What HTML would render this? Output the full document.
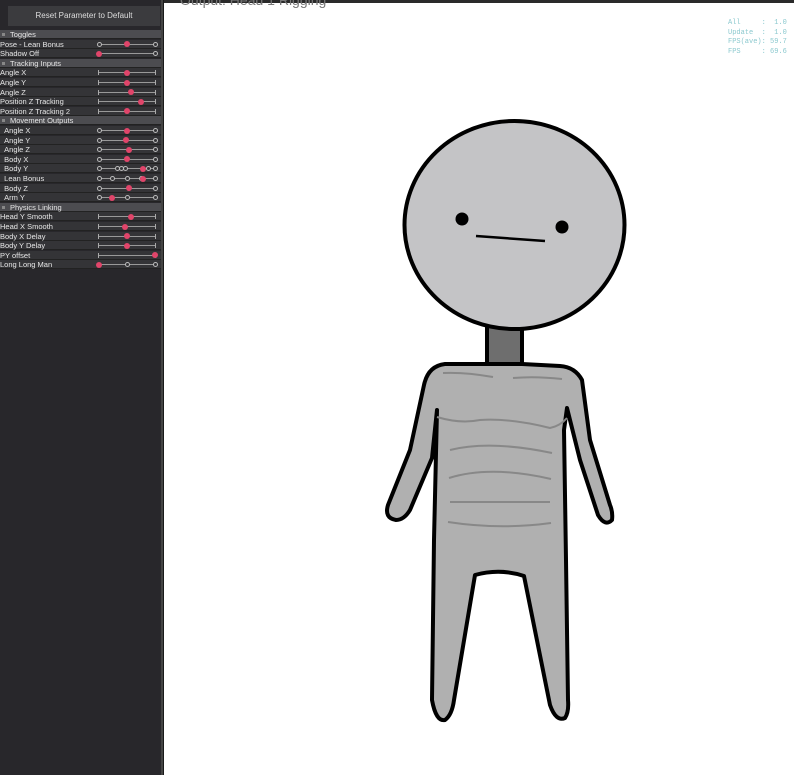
<!DOCTYPE html>
<html><head><meta charset="utf-8"><style>
*{margin:0;padding:0;box-sizing:border-box}
body{width:794px;height:775px;overflow:hidden;background:#fff;position:relative;font-family:"Liberation Sans",sans-serif}
#panel{position:absolute;left:0;top:0;width:161px;height:775px;background:#28272b}
#sep{position:absolute;left:161px;top:0;width:3px;height:775px;background:#444;border-right:1px solid #1a1a1a}
#topbar{position:absolute;left:164px;top:0;width:630px;height:3px;background:#2a2a2a}
.btn{position:absolute;left:8px;top:6px;width:152px;height:20px;background:#3b3b3e;color:#ddd;font-size:8px;text-align:center;line-height:20px}
.row{position:absolute;left:0;width:161px;height:9px;background:#343437;color:#e6e6e6;font-size:7.5px;line-height:9px;white-space:nowrap;border-bottom:1px solid #222}
.hd{background:#4c4c50}
.hd i{position:absolute;left:2px;top:3px;width:3px;height:3px;background:#888}
.hd span{position:absolute;left:10px}
.tr{position:absolute;left:98px;width:58px;top:4px;height:1px;background:#999}
.c{position:absolute;top:2px;width:5px;height:5px;border:1px solid #bbb;border-radius:50%;background:#343437}
.r{position:absolute;top:1.5px;width:6px;height:6px;border-radius:50%;background:#e0456a}
.tk{position:absolute;top:2px;width:1px;height:5px;background:#aaa}
#title{position:absolute;left:180px;top:-8px;font-size:14px;color:#777}
#stats{position:absolute;left:728px;top:19px;font-family:"Liberation Mono",monospace;font-size:7px;line-height:9.5px;color:#8cc9cf;white-space:pre}
</style></head><body>
<div id="panel">
<div class="btn">Reset Parameter to Default</div>
</div>
<div id="sep"></div>
<div id="topbar"></div>
<div id="title">Output: Head 1 Rigging</div>
<div id="stats">All     :  1.0
Update  :  1.0
FPS(ave): 59.7
FPS     : 69.6</div>
<div id="rows"></div>
<svg style="position:absolute;left:0;top:0" width="794" height="775">
<g stroke="#000" stroke-width="4" stroke-linejoin="round" stroke-linecap="round">
<rect x="487" y="320" width="35" height="48" fill="#6e6e6e"/>
<path d="M487,364 L445,364 Q428,366 424,385 L410,450 L388,505 Q384,518 396,520 Q404,520 410,510 L432,458 L437,410 L434,540 L432,700 Q436,722 445,720 Q452,715 454,700 L475,575 Q500,568 524,576 L550,705 Q556,722 565,718 Q569,712 568,700 L566,560 L564,430 L567,408 L580,460 L598,515 Q605,527 612,520 Q613,512 610,505 L590,440 L582,380 Q575,367 560,366 L522,364 Z" fill="#b0b0b0"/>
<ellipse cx="514.5" cy="225" rx="110" ry="104" fill="#c4c4c6"/>
</g>
<g stroke="#888" stroke-width="2" fill="none">
<path d="M443,373 Q465,372 493,377 M513,378 Q535,376 562,379"/>
<path d="M437,417 Q460,424 480,420 Q510,418 550,428 Q560,426 567,418"/>
<path d="M450,450 Q490,440 552,453"/>
<path d="M449,478 Q490,465 551,479"/>
<path d="M450,502 Q500,502 550,502"/>
<path d="M448,522 Q500,530 551,523"/>
</g>
<circle cx="462" cy="219" r="6.5"/>
<circle cx="562" cy="227" r="6.5"/>
<path d="M476,236 L545,241" stroke="#000" stroke-width="2.5" fill="none"/>
</svg>
<script>
var rows=[
['h','Toggles'],
['Pose - Lean Bonus','c',[99,155],127],
['Shadow Off','c',[155],99],
['h','Tracking Inputs'],
['Angle X','t',[],127],['Angle Y','t',[],127],['Angle Z','t',[],131],['Position Z Tracking','t',[],141],['Position Z Tracking 2','t',[],127],
['h','Movement Outputs'],
['&nbsp;&nbsp;Angle X','c',[99,155],127],['&nbsp;&nbsp;Angle Y','c',[99,155],126],['&nbsp;&nbsp;Angle Z','c',[99,155],129],['&nbsp;&nbsp;Body X','c',[99,155],127],
['&nbsp;&nbsp;Body Y','c',[99,117,121,125,148,155],143],['&nbsp;&nbsp;Lean Bonus','c',[99,112,127,141,155],143],['&nbsp;&nbsp;Body Z','c',[99,155],129],['&nbsp;&nbsp;Arm Y','c',[99,127,155],112],
['h','Physics Linking'],
['Head Y Smooth','t',[],131],['Head X Smooth','t',[],125],['Body X Delay','t',[],127],['Body Y Delay','t',[],127],['PY offset','t',[],155],['Long Long Man','c',[127,155],99]
];
var h='';
rows.forEach(function(r,i){var y=(30+i*9.6).toFixed(1);
if(r[0]=='h'){h+='<div class="row hd" style="top:'+y+'px"><i></i><span>'+r[1]+'</span></div>';return;}
var s='<div class="row" style="top:'+y+'px">'+r[0]+'<div class="tr"></div>';
if(r[1]=='t'){s+='<div class="tk" style="left:98px"></div><div class="tk" style="left:155px"></div>';}
r[2].forEach(function(x){s+='<div class="c" style="left:'+(x-2.5)+'px"></div>';});
s+='<div class="r" style="left:'+(r[3]-3)+'px"></div></div>';h+=s;});
document.getElementById('rows').innerHTML=h;
</script>
</body></html>
